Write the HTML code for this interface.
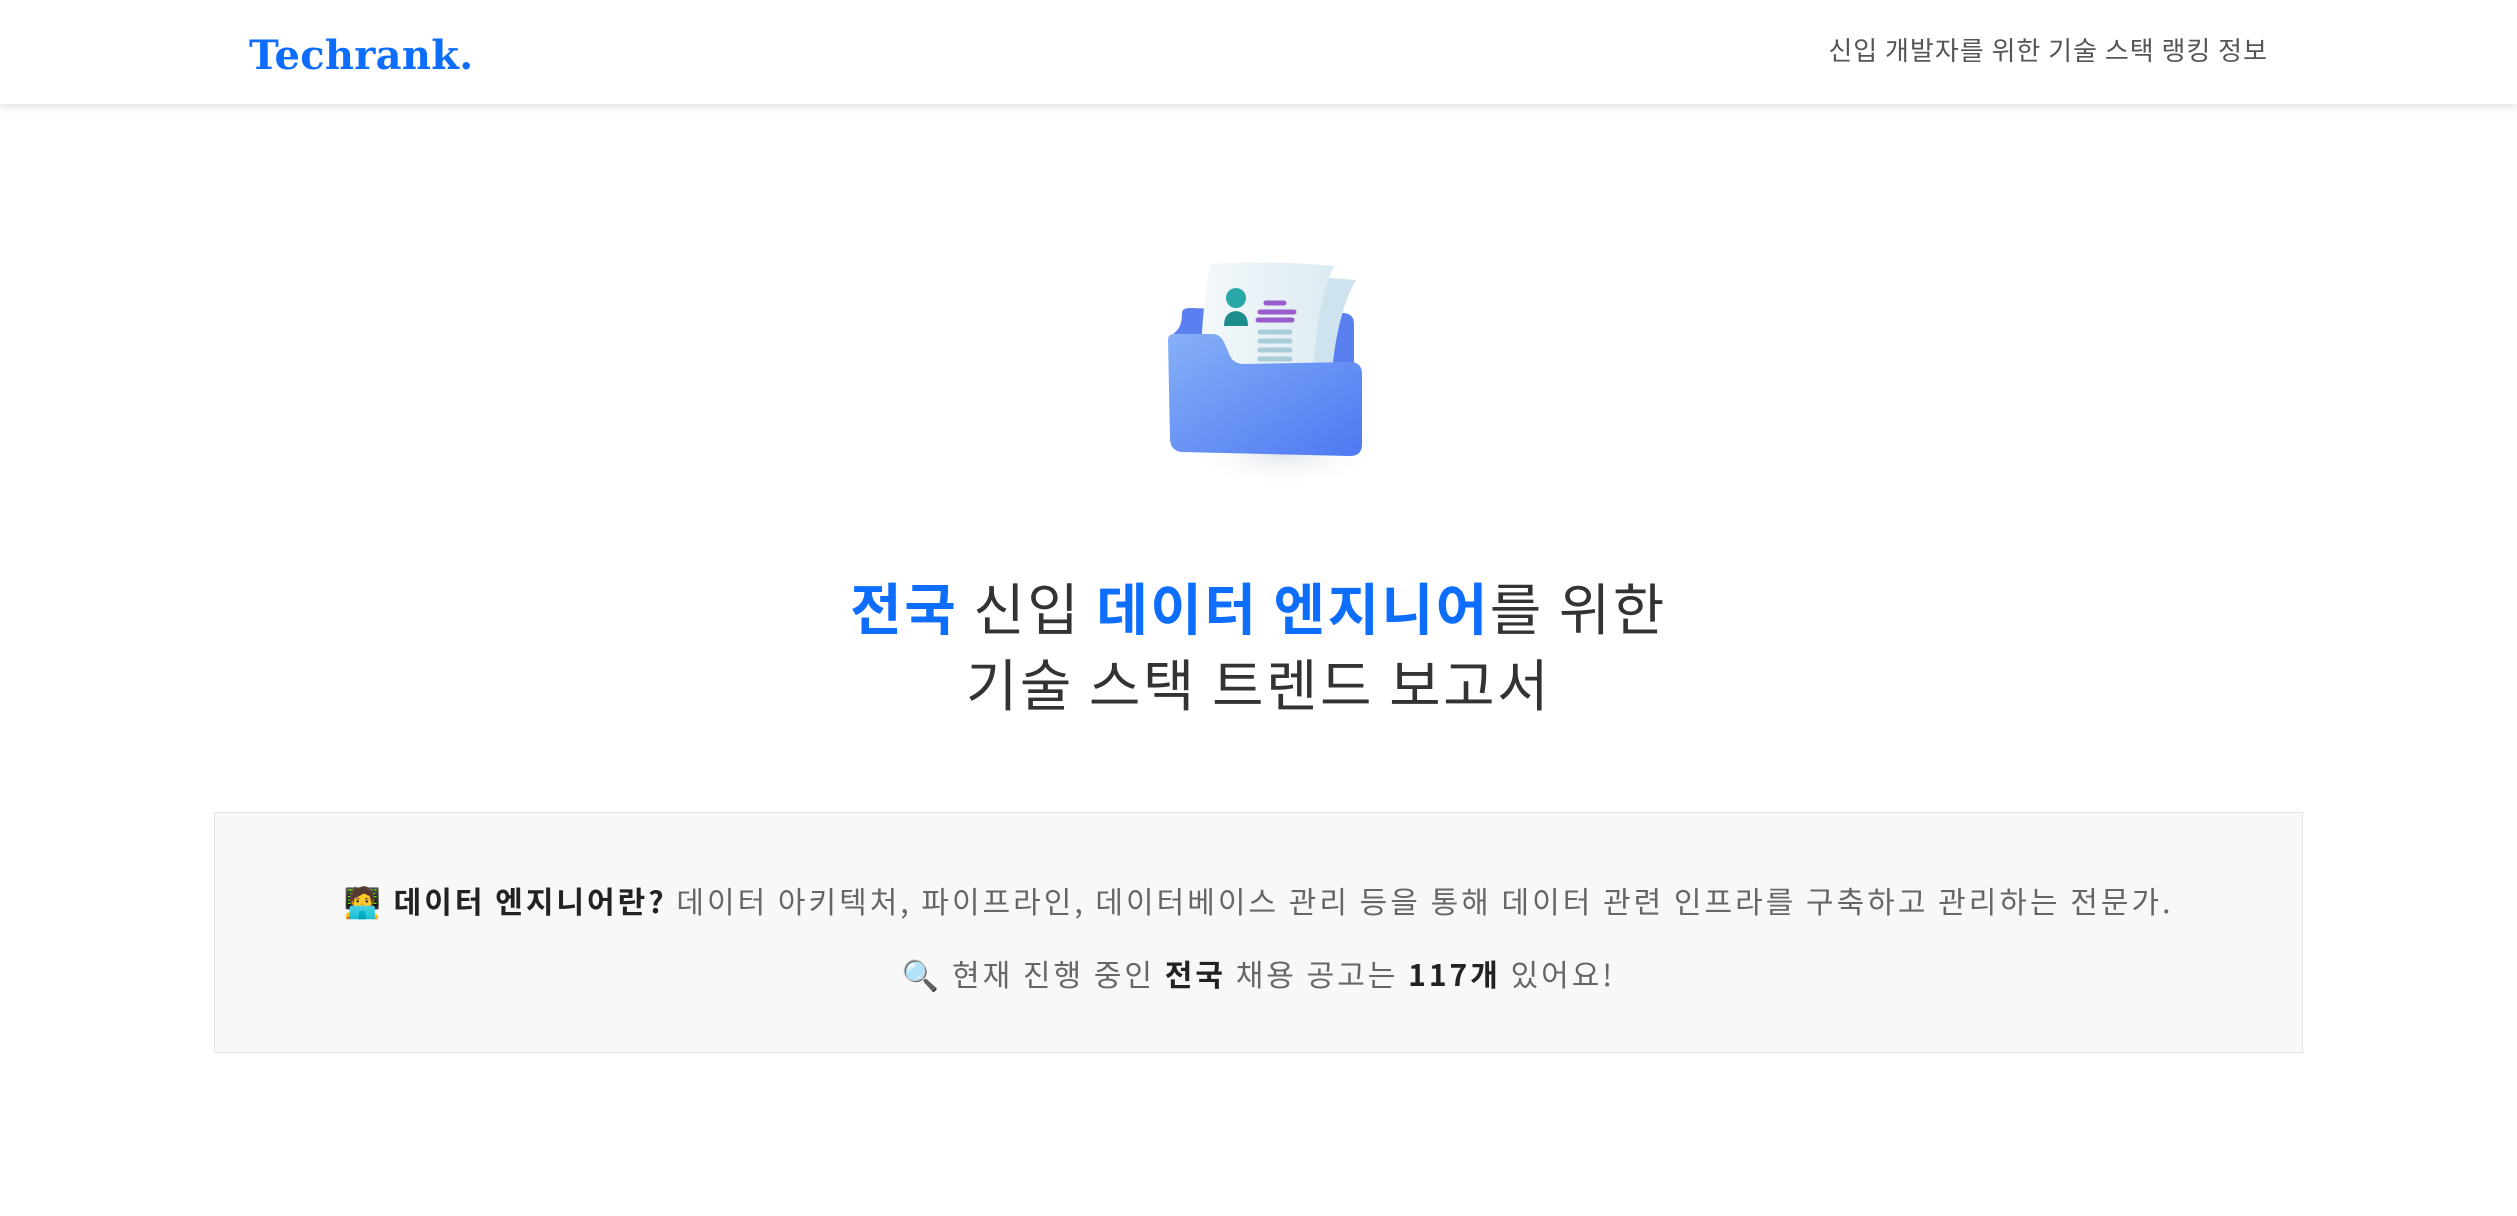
<!DOCTYPE html>
<html><head><meta charset="utf-8"><style>
*{margin:0;padding:0;box-sizing:border-box}
body{width:2517px;height:1216px;background:#fff;font-family:"Liberation Sans","Noto Sans CJK KR",sans-serif;overflow:hidden;position:relative}
.hdr{position:absolute;left:0;top:0;width:2517px;height:104px;background:#fff;box-shadow:0 3px 8px rgba(0,0,0,.12)}
.logo{position:absolute;left:249px;top:28px;font-family:"DejaVu Serif","Liberation Serif",serif;font-weight:bold;font-size:40px;color:#0d6efd;line-height:56px;letter-spacing:0.3px}
.nav{position:absolute;right:249px;top:32px;font-size:26px;color:#555;line-height:36px;letter-spacing:1px;font-family:"Noto Sans CJK KR",sans-serif}
.img{position:absolute;left:1164px;top:258px}
.title{position:absolute;left:0;width:2517px;top:569px;text-align:center;font-size:56px;line-height:76px;color:#333;font-family:"Noto Sans CJK KR",sans-serif;letter-spacing:2.5px}
.title b{color:#0d6efd;font-weight:bold}
.box{position:absolute;left:214px;top:812px;width:2089px;height:241px;background:#f8f8f8;border:1px solid #e3e3e3;text-align:center;font-size:30px;color:#666;font-family:"Noto Sans CJK KR",sans-serif;letter-spacing:3px;line-height:44px}
.box p{position:absolute;left:0;width:100%}
.box b{color:#222}
</style></head><body>
<div class="hdr"><div class="logo">Techrank.</div><div class="nav">신입 개발자를 위한 기술 스택 랭킹 정보</div></div>
<svg class="img" width="210" height="226" viewBox="0 0 210 226">
<defs>
<linearGradient id="f" x1="0" y1="0" x2="1" y2="1"><stop offset="0" stop-color="#86b0f7"/><stop offset="1" stop-color="#4d78f2"/></linearGradient>
<linearGradient id="p" x1="0" y1="0" x2="1" y2="0"><stop offset="0" stop-color="#f4f8fa"/><stop offset="1" stop-color="#dcebf2"/></linearGradient>
<radialGradient id="s"><stop offset="0" stop-color="#dfe4ea"/><stop offset="1" stop-color="#fff" stop-opacity="0"/></radialGradient>
</defs>
<ellipse cx="120" cy="195" rx="100" ry="35" fill="url(#s)"/>
<path d="M10 75 Q18 70 18 55 Q18 50 26 50 L180 55 Q190 56 190 66 L190 120 L10 120Z" fill="#5a7ff0"/>
<path d="M70 22 Q130 16 192 22 Q170 60 166 140 L60 140 Q60 70 70 22Z" fill="#cfe3ee"/>
<path d="M46 6 Q110 2 170 8 Q150 50 148 140 L36 140 Q36 60 46 6Z" fill="url(#p)"/>
<circle cx="72" cy="40" r="10" fill="#2aa8a8"/>
<path d="M60 68 Q60 54 72 53 Q84 54 84 68Z" fill="#1c8c8c"/>
<g stroke-linecap="round" stroke-width="5">
<path d="M102 45 L120 45M96 54 L130 54M94 62 L128 62" stroke="#9a5ccc"/>
<path d="M96 74 L126 74M96 83 L126 83M96 92 L126 92M96 101 L126 101" stroke="#a8cdd8"/>
</g>
<path d="M4 82 Q4 76 10 76 L48 76 Q56 76 60 84 L66 98 Q70 106 80 106 L186 104 Q198 104 198 116 L198 186 Q198 198 186 198 L18 194 Q6 193 6 180Z" fill="url(#f)"/>
</svg>
<div class="title"><b>전국</b> 신입 <b>데이터 엔지니어</b>를 위한<br>기술 스택 트렌드 보고서</div>
<div class="box">
<p style="top:65px">🧑‍💻 <b>데이터 엔지니어란?</b> 데이터 아키텍처, 파이프라인, 데이터베이스 관리 등을 통해 데이터 관련 인프라를 구축하고 관리하는 전문가.</p>
<p style="top:138px">🔍 현재 진행 중인 <b>전국</b> 채용 공고는 <b>117개</b> 있어요!</p>
</div>
</body></html>
